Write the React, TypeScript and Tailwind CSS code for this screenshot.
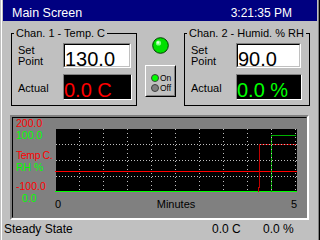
import React from "react";

function Radio({ on }: { on: boolean }) {
  return (
    <span
      className={
        "inline-block w-[8px] h-[8px] rounded-full border border-[#404040] " +
        (on ? "bg-[#00ff00]" : "bg-[#808080]")
      }
    />
  );
}

function SetBox({ value, w }: { value: string; w: string }) {
  return (
    <div className={"h-[25px] border border-t-[#808080] border-l-[#808080] border-b-white border-r-white " + w}>
      <div className="h-full border border-t-black border-l-black border-b-[#c0c0c0] border-r-[#c0c0c0] bg-white pt-[6px] text-[20px] leading-[16px] text-black whitespace-nowrap">
        {value}
      </div>
    </div>
  );
}

function ActualBox({ value, color, w }: { value: string; color: string; w: string }) {
  return (
    <div className={"h-[26px] border border-t-[#808080] border-l-[#808080] border-b-white border-r-white bg-black pt-[7px] text-[20px] leading-[16px] whitespace-nowrap " + w + " " + color}>
      {value}
    </div>
  );
}

function Group({
  title,
  setValue,
  actual,
  color,
  setW,
  actW,
  className,
}: {
  title: string;
  setValue: string;
  actual: string;
  color: string;
  setW: string;
  actW: string;
  className: string;
}) {
  return (
    <div className={"relative w-[126px] h-[73px] border border-black pl-[6px] pt-[9px] text-[11px] " + className}>
      <span className="absolute -top-[7px] left-[2px] px-[2px] bg-[#c0c0c0] leading-[12px] whitespace-nowrap">
        {title}
      </span>
      <div className="flex items-start">
        <div className="w-[45px] pt-[2px] leading-[11px]">
          Set
          <br />
          Point
        </div>
        <SetBox value={setValue} w={setW} />
      </div>
      <div className="flex items-center mt-[6px]">
        <div className="w-[45px] pt-[2px] leading-[11px]">Actual</div>
        <ActualBox value={actual} color={color} w={actW} />
      </div>
    </div>
  );
}

function Chart() {
  const vx = [24, 48, 72, 96, 120, 144, 168, 192, 216, 240];
  const hy = [16, 32, 48];
  return (
    <svg width="242" height="65" viewBox="0 0 242 65" shapeRendering="crispEdges" className="block">
      <rect x="1" y="1" width="241" height="63" fill="#000" />
      <line x1="0" y1="43.5" x2="242" y2="43.5" stroke="#ff0000" strokeWidth="1" />
      <line x1="0" y1="63.5" x2="242" y2="63.5" stroke="#00ff00" strokeWidth="1" />
      <polyline points="203.5,64 203.5,59 204.5,59 204.5,16.5 241,16.5" fill="none" stroke="#c00000" strokeWidth="1" />
      <polyline points="216.5,64 216.5,7.5 241,7.5" fill="none" stroke="#00b000" strokeWidth="1" />
      {vx.map((x) => (
        <line key={"v" + x} x1={x + 0.5} y1="1" x2={x + 0.5} y2="64" stroke="#c0c0c0" strokeWidth="1" strokeDasharray="1 3" />
      ))}
      {hy.map((y) => (
        <line key={"h" + y} x1="1" y1={y + 0.5} x2="242" y2={y + 0.5} stroke="#c0c0c0" strokeWidth="1" strokeDasharray="1 2" />
      ))}
    </svg>
  );
}

function Led() {
  return (
    <svg width="17" height="17" viewBox="0 0 17 17" className="block">
      <circle cx="8.5" cy="8.5" r="7.8" fill="#00e000" stroke="#004000" strokeWidth="1" />
      <circle cx="6.5" cy="6" r="2.6" fill="#80ff80" />
      <circle cx="6" cy="5.5" r="1.2" fill="#e0ffe0" />
    </svg>
  );
}

export default function App() {
  return (
    <div className="w-[320px] h-[240px] bg-[#c0c0c0] pl-px border-r border-black overflow-hidden font-['Liberation_Sans',Arial,sans-serif] text-black">
      <div className="h-full border-l border-white border-r border-r-[#808080] px-px flex flex-col">
        <div className="h-[21px] shrink-0 bg-[#000080] text-white flex justify-between pl-[9px] pr-[25px] pt-[6px] text-[12px] leading-[14px]">
          <span className="text-[12.5px]">Main Screen</span>
          <span>3:21:35 PM</span>
        </div>

        <div className="flex mt-[12px] h-[73px] shrink-0">
          <Group
            className="ml-[8px]"
            title="Chan. 1 - Temp. C"
            setValue="130.0"
            actual="0.0 C"
            color="text-[#ff0000]"
            setW="w-[68px]"
            actW="w-[69px]"
          />
          <div className="w-[47px] flex flex-col items-center">
            <div className="mt-[4px]">
              <Led />
            </div>
            <div className="mt-[11px] w-[31px] h-[32px] border border-t-white border-l-white border-b-black border-r-black">
              <div className="h-full border border-t-[#c0c0c0] border-l-[#c0c0c0] border-b-[#808080] border-r-[#808080] pl-[4px] pt-[6px] text-[8.5px] leading-[10px]">
                <div className="flex items-center gap-px h-[10px]">
                  <Radio on={true} />
                  <span>On</span>
                </div>
                <div className="flex items-center gap-px h-[10px]">
                  <Radio on={false} />
                  <span>Off</span>
                </div>
              </div>
            </div>
          </div>
          <Group
            className=""
            title="Chan. 2 - Humid. % RH"
            setValue="90.0"
            actual="0.0 %"
            color="text-[#00ff00]"
            setW="w-[65px]"
            actW="w-[66px]"
          />
        </div>

        <div className="mt-[9px] ml-[7px] w-[299px] h-[105px] shrink-0 border-2 border-t-[#808080] border-l-[#808080] border-b-white border-r-white">
          <div className="h-full border border-t-black border-l-black border-b-[#808080] border-r-[#808080] bg-[#808080] flex text-[10.5px] leading-[12px]">
            <div className="w-[42px] pl-[3px] -mt-px flex flex-col whitespace-nowrap">
              <div className="text-[#ff0000]">200.0</div>
              <div className="text-[#00ff00]">100.0</div>
              <div className="text-[#ff0000] mt-[8px] tracking-[-0.4px]">Temp C.</div>
              <div className="text-[#00ff00]">RH %</div>
              <div className="text-[#ff0000] mt-[7px]">-100.0</div>
              <div className="text-[#00ff00] pl-[6px]">0.0</div>
            </div>
            <div className="w-[242px] pt-[10px] text-[11px]">
              <Chart />
              <div className="mt-[5px] flex justify-between text-black">
                <span>0</span>
                <span>Minutes</span>
                <span>5</span>
              </div>
            </div>
          </div>
        </div>

        <div className="flex pl-px pt-[2px] text-[12px] leading-[14px]">
          <span className="flex-1">Steady State</span>
          <span className="w-[51px]">0.0 C</span>
          <span className="w-[54px]">0.0 %</span>
        </div>
      </div>
    </div>
  );
}
